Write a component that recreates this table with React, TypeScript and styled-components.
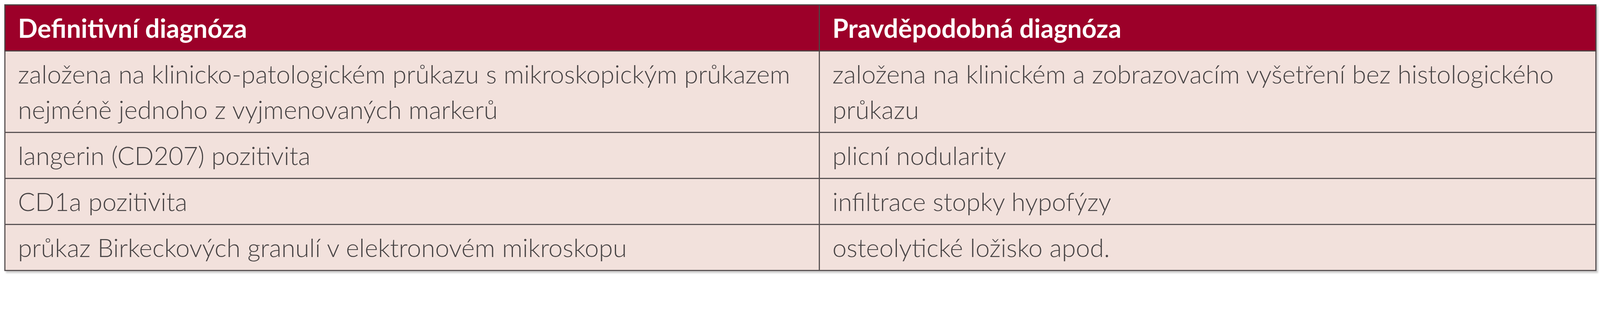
import React from "react";
import { styled, createGlobalStyle } from "styled-components";

const GlobalStyle = createGlobalStyle`
  html, body {
    margin: 0;
    padding: 0;
    background: #ffffff;
  }
  body {
    font-family: Lato, "Open Sans", sans-serif;
  }
`;

type Row = { definitive: string[]; probable: string[] };

const rows: Row[] = [
  {
    definitive: [
      "založena na klinicko-patologickém průkazu s mikroskopickým průkazem",
      "nejméně jednoho z vyjmenovaných markerů",
    ],
    probable: [
      "založena na klinickém a zobrazovacím vyšetření bez histologického",
      "průkazu",
    ],
  },
  { definitive: ["langerin (CD207) pozitivita"], probable: ["plicní nodularity"] },
  { definitive: ["CD1a pozitivita"], probable: ["infiltrace stopky hypofýzy"] },
  {
    definitive: ["průkaz Birkeckových granulí v elektronovém mikroskopu"],
    probable: ["osteolytické ložisko apod."],
  },
];

const Lines: React.FC<{ lines: string[] }> = ({ lines }) => (
  <>
    {lines.map((line, i) => (
      <React.Fragment key={i}>
        {i > 0 && <br />}
        {line}
      </React.Fragment>
    ))}
  </>
);

export default function App() {
  return (
    <>
      <GlobalStyle />
      <Page>
        <Table>
          <colgroup>
            <LeftCol />
            <col />
          </colgroup>
          <thead>
            <tr>
              <HeadCell>Definitivní diagnóza</HeadCell>
              <HeadCell>Pravděpodobná diagnóza</HeadCell>
            </tr>
          </thead>
          <tbody>
            {rows.map((row, i) => (
              <tr key={i}>
                <Cell>
                  <Lines lines={row.definitive} />
                </Cell>
                <Cell>
                  <Lines lines={row.probable} />
                </Cell>
              </tr>
            ))}
          </tbody>
        </Table>
      </Page>
    </>
  );
}

const Page = styled.div`
  padding: 11px;
`;

const Table = styled.table`
  width: 4076px;
  border-collapse: collapse;
  table-layout: fixed;
  border: 3.5px solid #534b4c;
  box-shadow: 4px 5px 4px rgba(0, 0, 0, 0.2);
`;

const LeftCol = styled.col`
  width: 2085px;
`;

const HeadCell = styled.th`
  background: #9c0029;
  color: #ffffff;
  text-align: left;
  font-family: Lato, "Open Sans", sans-serif;
  font-weight: 700;
  font-size: 66px;
  line-height: 91px;
  padding: 12px 32px;
  border: 3.5px solid #4f4344;
  white-space: nowrap;
  overflow: hidden;
`;

const Cell = styled.td`
  background: #f2e1dc;
  color: #474344;
  font-family: Lato, "Open Sans", sans-serif;
  font-weight: 300;
  font-size: 65px;
  line-height: 91px;
  padding: 12px 32px;
  border: 3.5px solid #5b5455;
  vertical-align: top;
  white-space: nowrap;
  overflow: hidden;
`;
